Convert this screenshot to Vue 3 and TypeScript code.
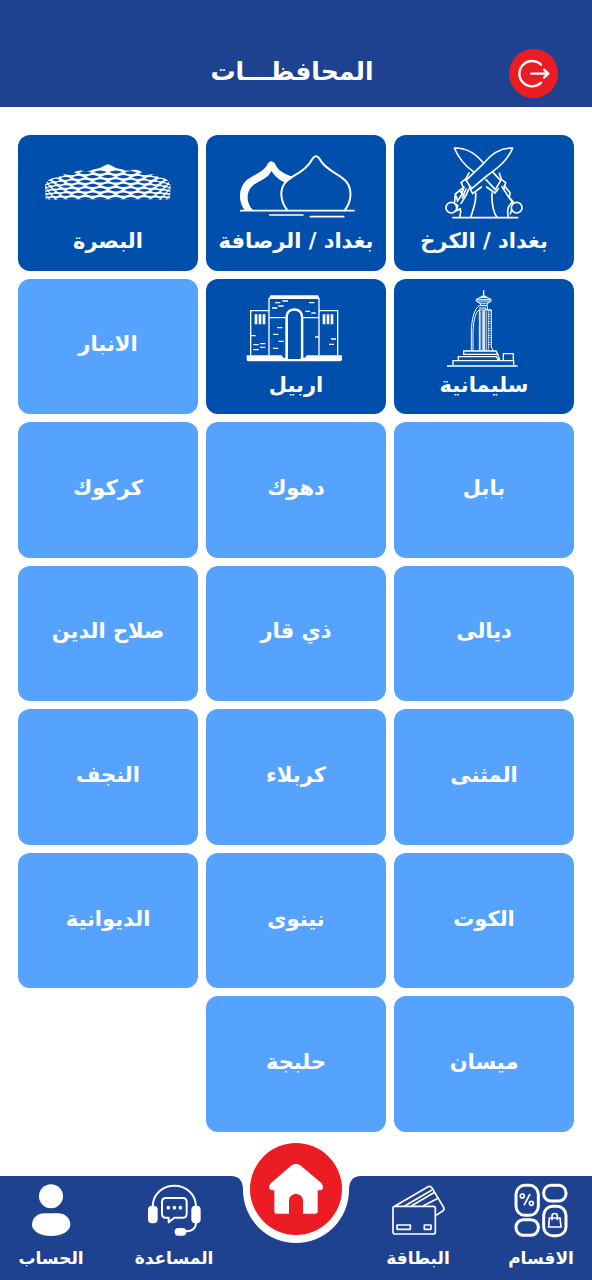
<script setup lang="ts">
type Landmark = 'swords' | 'domes' | 'stadium' | 'tower' | 'gate'

interface Governorate {
  name: string
  icon?: Landmark
}

const governorates: Governorate[] = [
  { name: 'بغداد / الكرخ', icon: 'swords' },
  { name: 'بغداد / الرصافة', icon: 'domes' },
  { name: 'البصرة', icon: 'stadium' },
  { name: 'سليمانية', icon: 'tower' },
  { name: 'اربيل', icon: 'gate' },
  { name: 'الانبار' },
  { name: 'بابل' },
  { name: 'دهوك' },
  { name: 'كركوك' },
  { name: 'ديالى' },
  { name: 'ذي قار' },
  { name: 'صلاح الدين' },
  { name: 'المثنى' },
  { name: 'كربلاء' },
  { name: 'النجف' },
  { name: 'الكوت' },
  { name: 'نينوى' },
  { name: 'الديوانية' },
  { name: 'ميسان' },
  { name: 'حلبجة' },
]

// Lens-shaped openings of the stadium facade, narrowing towards both sides.
function facadeOpenings(): string {
  const parts: string[] = []
  const rows = 7
  for (let row = 0; row < rows; row++) {
    const shift = row % 2 === 0 ? 0.5 : 0
    for (let i = -7; i <= 7; i++) {
      const angle = (i + shift) * 0.25
      if (Math.abs(angle) > 1.52) continue
      const c = Math.cos(angle)
      const x = 282 + 186 * Math.sin(angle)
      const top = 117 + 30 * (1 - c)
      const y = top + ((row + 0.6) * (210 - top)) / rows
      const w = 18 * c + 2
      const h = 4 + 6 * c
      const p = (n: number) => n.toFixed(1)
      parts.push(`M${p(x - w)} ${p(y)}Q${p(x)} ${p(y - h)} ${p(x + w)} ${p(y)}Q${p(x)} ${p(y + h)} ${p(x - w)} ${p(y)}Z`)
    }
  }
  return parts.join('')
}

const openings = facadeOpenings()
</script>

<template>
  <div class="page" dir="rtl" lang="ar">
    <header class="top">
      <h1 class="title">المحافظـــات</h1>
      <button class="exit" type="button" aria-label="خروج">
        <svg viewBox="955 57 147 147" fill="none" stroke="#fff" stroke-width="7" stroke-linecap="round" stroke-linejoin="round">
          <path d="M1051 104A38 38 0 1 0 1051 158M1022 131H1072M1060 119L1073 131L1060 143" />
        </svg>
      </button>
    </header>

    <main class="grid">
      <button v-for="g in governorates" :key="g.name" type="button" class="card" :class="{ featured: g.icon }">
        <svg v-if="g.icon === 'swords'" class="art" viewBox="60 29 432 252" fill="none" stroke="#fff" stroke-width="5" stroke-linecap="round" stroke-linejoin="round">
          <path d="M275 99C249 66 219 52 187 53C199 82 219 106 244 124" />
          <path d="M362 53C329 52 300 68 275 99L222 150L239 175L284 137C317 113 347 91 362 53Z" />
          <path d="M301 124L326 151L310 178L282 148" />
          <path d="M231 128L222 145L207 157M268 170L242 190L232 170M322 129L328 147L341 157L335 177M284 170L309 188L319 175" />
          <path d="M209 159L214 172L190 191L196 208M216 170L208 195L196 213M222 176L211 203M230 177L222 195L207 219M190 191L188 213M202 180L216 195" />
          <circle cx="178" cy="232" r="16" />
          <path d="M188 218L197 226L194 241L205 235C208 245 204 254 203 261M251 188C254 214 243 239 236 261" />
          <path d="M337 166L354 187L352 202L363 214M330 169L349 199L361 215M300 188C299 216 303 243 314 260" />
          <circle cx="374" cy="232" r="16" />
          <path d="M363 214C348 225 344 237 349 261M359 238L355 250" />
          <path d="M183 262H377" />
        </svg>

        <svg v-else-if="g.icon === 'domes'" class="art" viewBox="60 29 432 252" fill="none" stroke="#fff" stroke-width="6" stroke-linecap="round" stroke-linejoin="round">
          <path fill="#fff" stroke="none" d="M122 240C102 213 103 174 126 151C150 132 181 124 191 100Q202 85 214 101C221 122 242 130 264 139L245 157C225 150 212 137 202 122C191 146 164 151 146 166C125 185 126 218 147 240Z" />
          <path d="M250 240C230 214 224 178 246 154C269 132 308 121 325 86Q336 69 347 86C364 121 408 130 427 154C448 182 440 217 422 240" />
          <path d="M110 241H450M197 254H297M319 259H419" stroke-width="5" />
        </svg>

        <svg v-else-if="g.icon === 'stadium'" class="art" viewBox="66 29 432 252">
          <path fill="#fff" d="M95 207L93 165Q96 153 105 148Q115 141 132 142Q138 132 151 132Q164 135 174 130Q190 117 210 122Q225 125 240 117C257 117 269 105 282 102C295 105 307 117 324 117Q339 125 354 119Q374 115 390 130Q400 135 415 132Q428 132 434 142Q451 141 459 148Q468 154 470 166L468 207Q450 210 430 207H135Q112 210 95 207Z" />
          <path class="cutout" :d="openings" />
        </svg>

        <svg v-else-if="g.icon === 'tower'" class="art" viewBox="60 29 432 252" fill="none" stroke="#fff" stroke-width="3">
          <path d="M275 47V66M271 66H279" stroke-width="4" />
          <ellipse cx="275" cy="78" rx="23" ry="9" />
          <path d="M253 75H297M253 80H297M264 70L267 66H283L287 70M263 86L267 93H284L288 86" />
          <path d="M238 230V170C239 133 247 105 261 94H286V107H298V218L304 230" />
          <path d="M243 229V171C245 135 251 112 262 106V229M261 101H281V107M262 107H298" />
          <path d="M266 111V229M271 111V229M277 111V229M283 111V229M289 111V229" stroke-width="2" />
          <path d="M276 108V229" stroke-width="7" stroke="#d8e5f4" />
          <path d="M292 112V224" stroke-width="7" stroke-dasharray="2 5" />
          <path d="M215 230H312L317 240H215ZM199 257V247H313L319 257M183 273V259H365V273M334 257V238H364V258M317 240L323 257M199 247H312" stroke-width="4" />
          <path d="M165 275H377" stroke-width="4" />
        </svg>

        <svg v-else-if="g.icon === 'gate'" class="art" viewBox="60 29 432 252" fill="none" stroke="#fff" stroke-width="4">
          <path fill="#fff" stroke="none" d="M199 63H342L347 74H194ZM128 243H233L238 250H303L308 243H414V258L409 261H132L128 258Z" />
          <path d="M195 72V243M345 72V243M140 243V109H195M345 109H401V243M195 130H245M298 130H345" />
          <path d="M248 251V128C249 98 293 98 294 128V251" stroke-width="8" />
          <path fill="#004fac" stroke="none" d="M252 254V129C253 104 289 104 290 129V254Z" />
          <path d="M156 120V150M168 120V150M180 120V150M360 120V150M372 120V150M384 120V150" stroke-width="8" />
          <path d="M213 85H229M235 80H252M223 95H239M204 101H220M315 85H331M304 111H318M322 116H335M219 160H235M207 180H223M223 201H239M207 222H223M141 184H155M148 211H164M168 208H184M148 226H164M168 219H184M381 194H396M375 210H390M333 188H345" />
        </svg>

        <span class="name">{{ g.name }}</span>
      </button>
    </main>

    <nav class="bar">
      <svg class="notch" viewBox="0 0 130 68" aria-hidden="true">
        <path fill="#fff" d="M0 0C8 0 12 5 12 14A53 53 0 0 0 118 14C118 5 122 0 130 0Z" />
      </svg>

      <a class="item" href="#sections">
        <svg class="glyph" viewBox="423 159 180 168" fill="none" stroke="#fff" stroke-width="9">
          <rect x="438" y="166" width="67" height="90" rx="27" />
          <rect x="521" y="166" width="67" height="47" rx="22" />
          <rect x="438" y="269" width="67" height="47" rx="22" />
          <rect x="521" y="229" width="67" height="88" rx="27" />
          <g stroke-width="5">
            <circle cx="457" cy="198" r="6" />
            <circle cx="484" cy="220" r="6" />
            <path d="M480 192L462 226M538 264H570L573 291H536ZM546 271V258C546 248 562 248 562 258V271" />
          </g>
        </svg>
        <span>الاقسام</span>
      </a>

      <a class="item" href="#card">
        <svg class="glyph" viewBox="54 159 180 168" fill="none" stroke="#fff" stroke-width="5" stroke-linejoin="round">
          <rect x="69" y="229" width="127" height="83" rx="6" />
          <path d="M75 228L173 171Q181 166 186 174L221 232Q224 238 218 243L198 256" />
          <path d="M104 228L186 180M124 228L195 186M159 228L207 203" />
          <rect x="81" y="285" width="40" height="13" />
          <rect x="163" y="285" width="20" height="13" />
        </svg>
        <span>البطاقة</span>
      </a>

      <a class="home" href="#home" aria-label="الرئيسية">
        <svg viewBox="90 38 276 276">
          <path fill="#fff" d="M215 105Q228 96 241 105L304 158Q310 164 309 173Q308 180 301 180H293V242Q293 250 285 250H249V211C249 184 207 184 207 211V250H171Q163 250 163 242V180H155Q148 179 147 171Q147 164 153 158Z" />
        </svg>
      </a>

      <a class="item" href="#help">
        <svg class="glyph" viewBox="430 159 180 168" fill="none" stroke="#fff" stroke-width="6" stroke-linecap="round" stroke-linejoin="round">
          <path d="M456 232C456 146 586 146 586 232M586 276C587 294 575 304 553 304" />
          <rect x="445" y="230" width="23" height="47" rx="9" fill="#fff" />
          <rect x="575" y="230" width="22" height="47" rx="9" fill="#fff" />
          <rect x="525" y="297" width="29" height="17" rx="8" fill="#fff" />
          <path d="M495 204H546Q558 204 558 216V251Q558 263 546 263H521L504 277V263H495Q484 263 484 251V216Q484 204 495 204Z" />
          <path d="M503 233H503.1M521 233H521.1M539 233H539.1" stroke-width="11" />
        </svg>
        <span>المساعدة</span>
      </a>

      <a class="item" href="#account">
        <svg class="glyph" viewBox="63 159 180 168" fill="#fff">
          <circle cx="153" cy="199" r="36" />
          <path d="M133 250H174C194 250 211 264 211 284C211 304 183 318 153 318C123 318 96 304 96 284C96 264 113 250 133 250Z" />
        </svg>
        <span>الحساب</span>
      </a>
    </nav>
  </div>
</template>

<style>
body {
  margin: 0;
  background: #fff;
}
</style>

<style scoped>
.page {
  display: flex;
  flex-direction: column;
  min-height: 100vh;
  color: #fff;
  font-family: "DejaVu Sans", sans-serif;
  font-weight: 700;
}

.top {
  display: grid;
  grid-template-columns: 1fr auto 1fr;
  align-items: center;
  direction: ltr;
  padding: 49px 34px 9px 26px;
  background: #1f4290;
}

.title {
  grid-column: 2;
  margin: 0;
  padding-bottom: 4px;
  direction: rtl;
  font-size: 25px;
  line-height: 32px;
}

.exit {
  justify-self: end;
  width: 49px;
  height: 49px;
  padding: 0;
  border: 0;
  border-radius: 50%;
  background: #ec1c24;
}

.exit svg,
.home svg {
  display: block;
  width: 100%;
}

.grid {
  flex: 1;
  display: grid;
  grid-template-columns: repeat(3, 1fr);
  grid-auto-rows: 1fr;
  gap: 8px;
  padding: 28px 18px 44px;
}

.card {
  display: flex;
  flex-direction: column;
  align-items: center;
  justify-content: center;
  min-width: 0;
  padding: 0 4px 4px;
  border: 0;
  border-radius: 12px;
  background: #56a3ff;
  color: inherit;
  font: inherit;
  font-size: 21px;
  line-height: 32px;
}

.featured {
  justify-content: flex-start;
  padding: 5px 4px;
  background: #004fac;
}

.art {
  flex: none;
  width: 144px;
  height: 84px;
  margin-bottom: 1px;
}

.cutout {
  fill: #004fac;
}

.name {
  white-space: nowrap;
}

.bar {
  position: relative;
  display: grid;
  grid-template-columns: 51fr 72fr 50fr 72fr 51fr;
  justify-items: center;
  height: 104px;
  background: #1f4290;
}

.notch {
  position: absolute;
  top: 0;
  left: 50%;
  width: 130px;
  transform: translateX(-50%);
}

.item {
  display: flex;
  flex-direction: column;
  align-items: center;
  padding-top: 7px;
  color: inherit;
  font-size: 17px;
  line-height: 24px;
  text-decoration: none;
  white-space: nowrap;
}

.glyph {
  width: 60px;
  height: 56px;
  margin-bottom: 7px;
}

.home {
  position: relative;
  width: 92px;
  height: 92px;
  margin-top: -33px;
  border-radius: 50%;
  background: #ec1c24;
}
</style>
